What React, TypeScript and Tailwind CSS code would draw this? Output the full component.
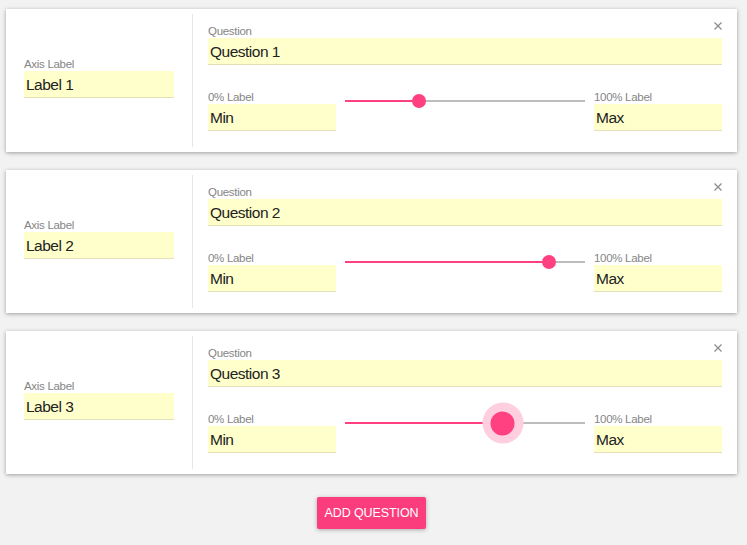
import React from "react";

type Q = { label: string; question: string; value: number; active?: boolean };

const questions: Q[] = [
  { label: "Label 1", question: "Question 1", value: 0.31 },
  { label: "Label 2", question: "Question 2", value: 0.85 },
  { label: "Label 3", question: "Question 3", value: 0.657, active: true },
];

function Field({ label, value, className }: { label: string; value: string; className?: string }) {
  return (
    <div className={className}>
      <div className="text-[11.5px] leading-[14px] tracking-[-0.3px] text-[#858585]">{label}</div>
      <div className="h-[27px] bg-[#ffffcc] border-b border-[#e3e0b8] pl-[2px] text-[15.5px] leading-[28px] tracking-[-0.5px] text-[#222]">
        {value}
      </div>
    </div>
  );
}

function Slider({ value, active }: { value: number; active?: boolean }) {
  return (
    <div className="relative mx-[9px] mt-[-3px] h-[28px] flex-1">
      <div className="absolute left-0 right-0 top-[13px] h-[2px] bg-[#bdbdbd]" />
      <div
        className="absolute left-0 top-[13px] h-[2px] bg-[#ff4081]"
        style={{ width: `${value * 100}%` }}
      />
      {active ? (
        <div
          className="absolute top-[14px] h-[41px] w-[41px] -translate-x-1/2 -translate-y-1/2 rounded-full bg-[#ffcfdf] flex items-center justify-center"
          style={{ left: `${value * 100}%` }}
        >
          <div className="h-[24px] w-[24px] rounded-full bg-[#ff4081]" />
        </div>
      ) : (
        <div
          className="absolute top-[14px] h-[14px] w-[14px] -translate-x-1/2 -translate-y-1/2 rounded-full bg-[#ff4081]"
          style={{ left: `${value * 100}%` }}
        />
      )}
    </div>
  );
}

function QuestionCard({ q }: { q: Q }) {
  return (
    <div className="relative flex h-[143px] bg-white py-[5px] shadow-[0_1px_4px_rgba(0,0,0,0.35)]">
      <button className="absolute right-[15px] top-[13px] p-0">
        <svg width="8" height="8" viewBox="0 0 8 8" stroke="#8a8a8a" strokeWidth="1.2">
          <path d="M0.5 0.5 L7.5 7.5 M7.5 0.5 L0.5 7.5" />
        </svg>
      </button>
      {/* Axis label column */}
      <div className="flex w-[186px] flex-col justify-center px-[18px] pb-[6px]">
        <Field label="Axis Label" value={q.label} />
      </div>
      {/* Question column */}
      <div className="flex-1 border-l border-[#e6e6e6] pl-[15px] pr-[15px] pt-[10px]">
        <Field label="Question" value={q.question} />
        <div className="mt-[25px] flex items-start">
          <Field label="0% Label" value="Min" className="w-[128px]" />
          <Slider value={q.value} active={q.active} />
          <Field label="100% Label" value="Max" className="w-[128px]" />
        </div>
      </div>
    </div>
  );
}

export default function App() {
  return (
    <main className="min-h-[545px] bg-[#f2f2f2] pl-[6px] pr-[10px] pt-[9px] font-['Liberation_Sans',Arial,sans-serif]">
      <div className="flex flex-col gap-[18px]">
        {questions.map((q) => (
          <QuestionCard key={q.question} q={q} />
        ))}
      </div>
      <div className="mt-[23px] flex justify-center">
        <button className="h-[32px] w-[109px] rounded-[2px] bg-[#fb3d7e] text-[12.5px] tracking-[-0.1px] text-white shadow-[0_1px_4px_rgba(0,0,0,0.3)]">
          ADD QUESTION
        </button>
      </div>
    </main>
  );
}
